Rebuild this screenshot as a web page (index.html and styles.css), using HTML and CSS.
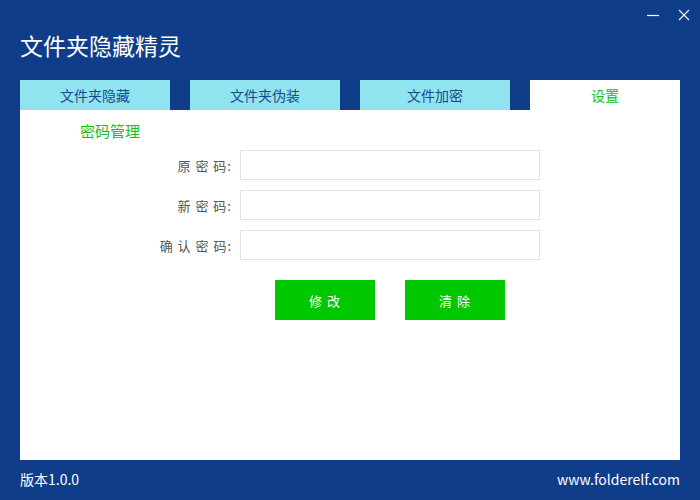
FILE: index.html
```html
<!DOCTYPE html>
<html lang="zh-CN">
<head>
    <meta charset="UTF-8">
    <title>文件夹隐藏精灵</title>
    <link rel="stylesheet" href="styles.css">
</head>
<body>
    <div class="window">
        <div class="titlebar">
            <h1 class="app-title">文件夹隐藏精灵</h1>
            <div class="win-btns">
                <span class="win-btn">
                    <svg width="14" height="14" viewBox="0 0 14 14"><path d="M1 7.5H13" stroke="#fff" stroke-width="1.2"/></svg>
                </span>
                <span class="win-btn">
                    <svg width="14" height="14" viewBox="0 0 14 14"><path d="M2 2L12 12M12 2L2 12" stroke="#fff" stroke-width="1.1"/></svg>
                </span>
            </div>
        </div>
        <div class="tabs">
            <div class="tab">文件夹隐藏</div>
            <div class="tab">文件夹伪装</div>
            <div class="tab">文件加密</div>
            <div class="tab active">设置</div>
        </div>
        <div class="panel">
            <div class="section-title">密码管理</div>
            <div class="form">
                <div class="row">
                    <label>原 密 码:</label>
                    <input type="password" class="field">
                </div>
                <div class="row">
                    <label>新 密 码:</label>
                    <input type="password" class="field">
                </div>
                <div class="row">
                    <label>确 认 密 码:</label>
                    <input type="password" class="field">
                </div>
                <div class="actions">
                    <button class="btn">修 改</button>
                    <button class="btn">清 除</button>
                </div>
            </div>
        </div>
        <div class="footer">
            <span>版本1.0.0</span>
            <span>www.folderelf.com</span>
        </div>
    </div>
</body>
</html>
```

FILE: styles.css
```css
html, body {
    margin: 0;
    height: 100%;
    background-color: #0f3d8a;
    font-family: "Noto Sans CJK SC", "Noto Sans", sans-serif;
}
.window {
    width: 700px;
    height: 500px;
    box-sizing: border-box;
    padding: 0 20px;
    display: flex;
    flex-direction: column;
}
.titlebar {
    height: 80px;
    display: flex;
    justify-content: space-between;
    align-items: flex-start;
}
.app-title {
    margin: 29px 0 0 0;
    font-size: 23px;
    font-weight: normal;
    color: #fff;
    line-height: 32px;
}
.win-btns {
    display: flex;
    gap: 17px;
    margin-top: 8px;
    margin-right: -11px;
}
.win-btn {
    width: 14px;
    height: 14px;
    display: flex;
}
.tabs {
    display: flex;
    gap: 20px;
    height: 30px;
}
.tab {
    width: 150px;
    background: #90e4ef;
    color: #1b4a8c;
    font-size: 14px;
    line-height: 30px;
    text-align: center;
}
.tab.active {
    background: #fff;
    color: #14c014;
}
.panel {
    background: #fff;
    height: 350px;
    box-sizing: border-box;
    padding: 10px 0 0 60px;
}
.section-title {
    color: #14c014;
    font-size: 15px;
    line-height: 22px;
}
.form {
    margin-top: 8px;
    display: flex;
    flex-direction: column;
    gap: 10px;
}
.row {
    display: flex;
    align-items: center;
}
.row label {
    width: 152px;
    text-align: right;
    padding-right: 8px;
    color: #555;
    font-size: 13px;
    letter-spacing: 1px;
}
.field {
    width: 300px;
    height: 30px;
    box-sizing: border-box;
    border: 1px solid #e2e2e2;
    margin: 0;
    outline: none;
}
.actions {
    display: flex;
    gap: 30px;
    padding-left: 195px;
    margin-top: 10px;
}
.btn {
    width: 100px;
    height: 40px;
    border: none;
    background: #00c800;
    color: #fff;
    font-family: inherit;
    font-size: 13px;
    letter-spacing: 1px;
}
.footer {
    flex: 1;
    display: flex;
    justify-content: space-between;
    align-items: center;
    color: #fff;
    font-size: 14px;
    padding-bottom: 2px;
}
```
